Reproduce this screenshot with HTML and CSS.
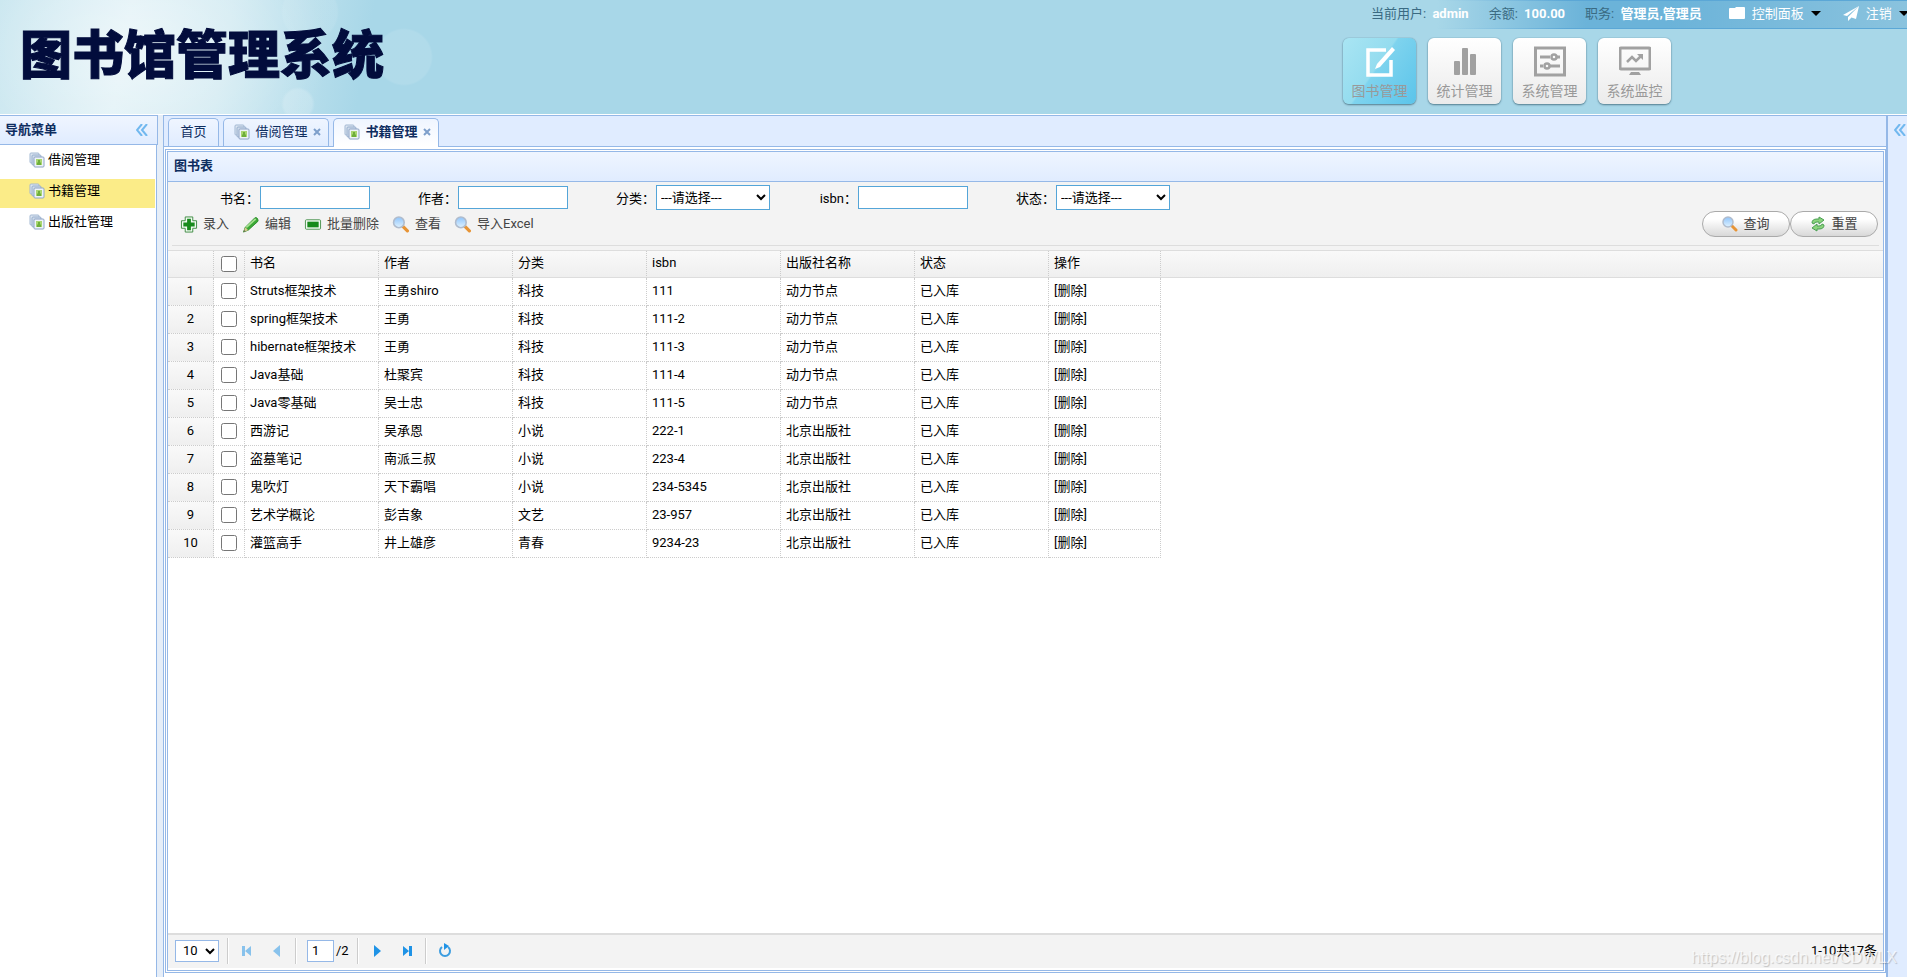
FILE: index.html
```html
<!DOCTYPE html>
<html lang="zh-CN">
<head>
<meta charset="utf-8">
<title>图书馆管理系统</title>
<link rel="stylesheet" href="styles.css">
</head>
<body>
<svg class="sprite" aria-hidden="true">
  <defs>
    <linearGradient id="glass" x1="0" y1="0" x2="0" y2="1"><stop offset="0" stop-color="#8fc4fb"/><stop offset="1" stop-color="#dff2ff"/></linearGradient>
  </defs>
  <symbol id="pages" viewBox="0 0 16 16">
    <rect x="1" y="1" width="9" height="10" rx="1" fill="#dce6f1" stroke="#a3b8d3"/>
    <rect x="3" y="3" width="9" height="10" rx="1" fill="#cfdceb" stroke="#98aecd"/>
    <rect x="5" y="5" width="10" height="10" rx="1" fill="#eef3f9" stroke="#8ea4c6"/>
    <rect x="7" y="7" width="6" height="6" fill="#a9d672"/>
    <path d="M8 13v-2l1-1V8h2v2l1 1v2z" fill="#6fae3c"/>
  </symbol>
  <symbol id="add" viewBox="0 0 18 18">
    <path d="M5 1h8v4h4v8h-4v4H5v-4H1V5h4z" fill="#f2faf2" stroke="#3d8a41" stroke-linejoin="round"/>
    <path d="M7 3h4v4h4v4h-4v4H7v-4H3V7h4z" fill="#178a1c"/>
  </symbol>
  <symbol id="pencil" viewBox="0 0 18 18">
    <path d="M1 17l2-5L13 2q2-1 3 1t0 3L6 15z" fill="#3aa935" stroke="#2b8a2a"/>
    <path d="M4 12L14 3" stroke="#a5e08f" stroke-width="2"/>
    <path d="M1 17l2-5 3 3z" fill="#d9c98e"/><path d="M1 17l1-2 1 1z" fill="#333"/>
  </symbol>
  <symbol id="minus" viewBox="0 0 18 18">
    <rect x="1" y="4" width="16" height="10" rx="1" fill="#f4fbf4" stroke="#4b9350"/>
    <rect x="3" y="6" width="12" height="6" fill="#178a1c"/>
  </symbol>
  <symbol id="search" viewBox="0 0 16 16">
    <path d="M10 10l4 4" stroke="#e79435" stroke-width="3" stroke-linecap="round"/>
    <circle cx="6" cy="6" r="5" fill="url(#glass)" stroke="#b0bccd" stroke-width="1.5"/>
  </symbol>
  <symbol id="reload" viewBox="0 0 16 16">
    <path d="M2 7q0-4 5-4h2V1l5 3-5 4V6H7Q4 6 4 8z" fill="#8bd47d" stroke="#4a9f52" stroke-linejoin="round"/>
    <path d="M14 9q0 4-5 4H7v2l-5-3 5-4v2h2q3 0 3-2z" fill="#8bd47d" stroke="#4a9f52" stroke-linejoin="round"/>
  </symbol>
  <symbol id="chevrons" viewBox="0 0 12 12"><path d="M6 0L1 6l5 6M11 0L6 6l5 6" fill="none" stroke="#71b8ef" stroke-width="2"/></symbol>
  <symbol id="cross" viewBox="0 0 8 8"><path d="M1 1l6 6M7 1L1 7" stroke="#7e9fcb" stroke-width="2"/></symbol>
</svg>

<header class="header">
  <h1 class="logo">图书馆管理系统</h1>
  <div class="header-side">
    <div class="userbar">
      <span class="info">当前用户: <b>admin</b></span>
      <span class="info">余额: <b>100.00</b></span>
      <span class="info">职务: <b>管理员,管理员</b></span>
      <button class="user-menu" type="button">
        <svg class="icon" viewBox="0 0 16 16"><path d="M0 3q0-1 1-1h5l1-1h8q1 0 1 1v10q0 1-1 1H1q-1 0-1-1z" fill="#fff"/></svg>
        控制面板<span class="caret"></span>
      </button>
      <button class="user-menu logout" type="button">
        <svg class="icon" viewBox="0 0 16 16"><path d="M16 0L0 9l4 1zM16 0L5 11l0 4 3-3zM16 0L7 11l6 2z" fill="#fff"/></svg>
        注销<span class="caret"></span>
      </button>
    </div>
    <nav class="apps">
      <button class="app app-active" type="button">
        <svg class="app-icon" viewBox="0 0 32 32"><path d="M22 4H4v25h23V14" fill="none" stroke="#fff" stroke-width="3.5"/><path d="M28 1l3 3-15 17-5 2 2-5z" fill="#fff"/></svg>
        图书管理
      </button>
      <button class="app" type="button">
        <svg class="app-icon" viewBox="0 0 32 32"><g fill="#a1a1a1"><rect x="5" y="15" width="6" height="14" rx="1"/><rect x="13" y="2" width="6" height="27" rx="1"/><rect x="21" y="8" width="6" height="21" rx="1"/></g></svg>
        统计管理
      </button>
      <button class="app" type="button">
        <svg class="app-icon" viewBox="0 0 32 32"><g fill="none" stroke="#a1a1a1" stroke-width="3"><rect x="1.500" y="2" width="29" height="27"/><path d="M6 11h10M23 11h3M6 20h3M16 20h10"/><circle cx="20" cy="11" r="2.500" stroke-width="2.500"/><circle cx="13" cy="20" r="2.500" stroke-width="2.500"/></g></svg>
        系统管理
      </button>
      <button class="app" type="button">
        <svg class="app-icon" viewBox="0 0 32 32"><rect x="1" y="2" width="30" height="21" rx="1" fill="none" stroke="#a1a1a1" stroke-width="3"/><path d="M8 16l5-5 4 4 6-6" fill="none" stroke="#a1a1a1" stroke-width="2.500"/><path d="M18 8h6v6zM12 26h8l2 3H10z" fill="#a1a1a1"/></svg>
        系统监控
      </button>
    </nav>
  </div>
</header>

<div class="workspace">
  <aside class="west">
    <div class="west-head">
      <h2 class="panel-title">导航菜单</h2>
      <button class="collapse" type="button" aria-label="收起"><svg class="chev"><use href="#chevrons"/></svg></button>
    </div>
    <ul class="menu">
      <li><a class="menu-link" href="#borrow"><svg class="icon"><use href="#pages"/></svg>借阅管理</a></li>
      <li><a class="menu-link menu-current" href="#books"><svg class="icon"><use href="#pages"/></svg>书籍管理</a></li>
      <li><a class="menu-link" href="#publisher"><svg class="icon"><use href="#pages"/></svg>出版社管理</a></li>
    </ul>
  </aside>

  <main class="center">
    <div class="tabs" role="tablist">
      <div class="tab"><button class="tab-label" role="tab" type="button">首页</button></div>
      <div class="tab tab-closable"><button class="tab-label" role="tab" type="button"><svg class="icon"><use href="#pages"/></svg>借阅管理</button><button class="tab-close" type="button" aria-label="关闭"><svg class="cross"><use href="#cross"/></svg></button></div>
      <div class="tab tab-closable tab-selected"><button class="tab-label" role="tab" type="button" aria-selected="true"><svg class="icon"><use href="#pages"/></svg>书籍管理</button><button class="tab-close" type="button" aria-label="关闭"><svg class="cross"><use href="#cross"/></svg></button></div>
    </div>
    <div class="frame">
      <section class="panel">
        <h2 class="panel-title panel-head">图书表</h2>
        <div class="toolbar">
          <form class="filters">
            <label class="filter" for="f-name">书名<span class="colon">：</span></label><input class="text" id="f-name" type="text">
            <label class="filter" for="f-author">作者<span class="colon">：</span></label><input class="text" id="f-author" type="text">
            <label class="filter" for="f-type">分类<span class="colon">：</span></label><select class="choice" id="f-type"><option>---请选择---</option></select>
            <label class="filter filter-after-choice" for="f-isbn">isbn<span class="colon">：</span></label><input class="text" id="f-isbn" type="text">
            <label class="filter" for="f-state">状态<span class="colon">：</span></label><select class="choice" id="f-state"><option>---请选择---</option></select>
          </form>
          <div class="actions">
            <button class="action" type="button"><svg class="tool-icon"><use href="#add"/></svg>录入</button>
            <button class="action" type="button"><svg class="tool-icon"><use href="#pencil"/></svg>编辑</button>
            <button class="action" type="button"><svg class="tool-icon"><use href="#minus"/></svg>批量删除</button>
            <button class="action" type="button"><svg class="tool-icon"><use href="#search"/></svg>查看</button>
            <button class="action" type="button"><svg class="tool-icon"><use href="#search"/></svg>导入Excel</button>
            <div class="queries">
              <button class="pill" type="button"><svg class="icon"><use href="#search"/></svg>查询</button>
              <button class="pill" type="button"><svg class="icon"><use href="#reload"/></svg>重置</button>
            </div>
          </div>
        </div>
        <div class="grid">
          <table class="books">
            <colgroup><col class="c-num"><col class="c-check"><col class="c-data"><col class="c-data"><col class="c-data"><col class="c-data"><col class="c-data"><col class="c-data"><col class="c-op"><col></colgroup>
            <thead>
              <tr><th></th><th class="check"><input class="tick" type="checkbox" aria-label="全选"></th><th>书名</th><th>作者</th><th>分类</th><th>isbn</th><th>出版社名称</th><th>状态</th><th>操作</th><th class="rest"></th></tr>
            </thead>
            <tbody>
              <tr><td class="num">1</td><td class="check"><input class="tick" type="checkbox" aria-label="选择 1"></td><td>Struts框架技术</td><td>王勇shiro</td><td>科技</td><td>111</td><td>动力节点</td><td>已入库</td><td><a class="del" href="#d1">[删除]</a></td><td class="rest"></td></tr>
              <tr><td class="num">2</td><td class="check"><input class="tick" type="checkbox" aria-label="选择 2"></td><td>spring框架技术</td><td>王勇</td><td>科技</td><td>111-2</td><td>动力节点</td><td>已入库</td><td><a class="del" href="#d2">[删除]</a></td><td class="rest"></td></tr>
              <tr><td class="num">3</td><td class="check"><input class="tick" type="checkbox" aria-label="选择 3"></td><td>hibernate框架技术</td><td>王勇</td><td>科技</td><td>111-3</td><td>动力节点</td><td>已入库</td><td><a class="del" href="#d3">[删除]</a></td><td class="rest"></td></tr>
              <tr><td class="num">4</td><td class="check"><input class="tick" type="checkbox" aria-label="选择 4"></td><td>Java基础</td><td>杜聚宾</td><td>科技</td><td>111-4</td><td>动力节点</td><td>已入库</td><td><a class="del" href="#d4">[删除]</a></td><td class="rest"></td></tr>
              <tr><td class="num">5</td><td class="check"><input class="tick" type="checkbox" aria-label="选择 5"></td><td>Java零基础</td><td>吴士忠</td><td>科技</td><td>111-5</td><td>动力节点</td><td>已入库</td><td><a class="del" href="#d5">[删除]</a></td><td class="rest"></td></tr>
              <tr><td class="num">6</td><td class="check"><input class="tick" type="checkbox" aria-label="选择 6"></td><td>西游记</td><td>吴承恩</td><td>小说</td><td>222-1</td><td>北京出版社</td><td>已入库</td><td><a class="del" href="#d6">[删除]</a></td><td class="rest"></td></tr>
              <tr><td class="num">7</td><td class="check"><input class="tick" type="checkbox" aria-label="选择 7"></td><td>盗墓笔记</td><td>南派三叔</td><td>小说</td><td>223-4</td><td>北京出版社</td><td>已入库</td><td><a class="del" href="#d7">[删除]</a></td><td class="rest"></td></tr>
              <tr><td class="num">8</td><td class="check"><input class="tick" type="checkbox" aria-label="选择 8"></td><td>鬼吹灯</td><td>天下霸唱</td><td>小说</td><td>234-5345</td><td>北京出版社</td><td>已入库</td><td><a class="del" href="#d8">[删除]</a></td><td class="rest"></td></tr>
              <tr><td class="num">9</td><td class="check"><input class="tick" type="checkbox" aria-label="选择 9"></td><td>艺术学概论</td><td>彭吉象</td><td>文艺</td><td>23-957</td><td>北京出版社</td><td>已入库</td><td><a class="del" href="#d9">[删除]</a></td><td class="rest"></td></tr>
              <tr><td class="num">10</td><td class="check"><input class="tick" type="checkbox" aria-label="选择 10"></td><td>灌篮高手</td><td>井上雄彦</td><td>青春</td><td>9234-23</td><td>北京出版社</td><td>已入库</td><td><a class="del" href="#d10">[删除]</a></td><td class="rest"></td></tr>
            </tbody>
          </table>
        </div>
        <footer class="pager">
          <select class="page-size" aria-label="每页条数"><option>10</option></select>
          <span class="sep"></span>
          <button class="page-btn page-off" type="button" aria-label="首页"><svg class="page-icon" viewBox="0 0 16 16"><path d="M3 3h3v10H3zM12 3v10L6 8z"/></svg></button>
          <button class="page-btn page-off" type="button" aria-label="上一页"><svg class="page-icon" viewBox="0 0 16 16"><path d="M11 2v12L4 8z"/></svg></button>
          <span class="sep"></span>
          <label class="page-now"><input class="page-input" type="text" value="1" aria-label="页码">/2</label>
          <span class="sep"></span>
          <button class="page-btn" type="button" aria-label="下一页"><svg class="page-icon" viewBox="0 0 16 16"><path d="M5 2v12l7-6z"/></svg></button>
          <button class="page-btn" type="button" aria-label="末页"><svg class="page-icon" viewBox="0 0 16 16"><path d="M10 3h3v10h-3zM4 3v10l6-5z"/></svg></button>
          <span class="sep"></span>
          <button class="page-btn" type="button" aria-label="刷新"><svg class="page-icon" viewBox="0 0 16 16"><path d="M5 4a5 5 0 1 0 6 0" fill="none" stroke="#3c9de0" stroke-width="2"/><path d="M7 0l5 3-5 4z"/></svg></button>
          <span class="total">1-10共17条</span>
        </footer>
      </section>
    </div>
  </main>

  <aside class="east"><button class="collapse" type="button" aria-label="展开"><svg class="chev"><use href="#chevrons"/></svg></button></aside>
</div>
<div class="watermark">https://blog.csdn.net/CDWLX</div>
</body>
</html>
```
FILE: styles.css
```css
* { box-sizing: border-box; }

body {
  margin: 0;
  height: 100vh;
  display: flex;
  flex-direction: column;
  overflow: hidden;
  background: #fff;
  color: #000;
  font: 13px/18px Roboto, "Noto Sans CJK SC", sans-serif;
}

button, input, select { font: inherit; color: inherit; margin: 0; }
button { border: 0; padding: 0; background: none; cursor: pointer; white-space: nowrap; }
h1, h2, ul { margin: 0; padding: 0; }
a { color: inherit; text-decoration: none; }
svg { display: block; flex: none; }

.sprite { position: absolute; width: 0; height: 0; }
.icon { width: 16px; height: 16px; }
.tool-icon { width: 18px; height: 17px; }
.chev { width: 12px; height: 12px; }
.cross { width: 8px; height: 8px; }

/* Header */
.header {
  flex: none;
  height: 115px;
  display: flex;
  justify-content: space-between;
  border-bottom: 1px solid #fff;
  background:
    radial-gradient(circle at 310px 12px, rgba(255,255,255,.08) 27px, transparent 29px),
    radial-gradient(circle at 404px 57px, rgba(255,255,255,.1) 27px, transparent 29px),
    radial-gradient(circle at 298px 104px, rgba(255,255,255,.18) 14px, transparent 17px),
    radial-gradient(ellipse 200px 150px at 130px 50px, rgba(255,255,255,.5), transparent),
    linear-gradient(100deg, #c4e4ee 0, #dceff5 130px, #cfe9f1 230px, #a8d7e8 370px);
}
.logo {
  padding: 17px 0 0 20px;
  color: #020c3c;
  font: 900 52px/70px "Noto Sans CJK SC", sans-serif;
  -webkit-text-stroke: 1px #020c3c;
  stroke-linejoin: round;
  white-space: nowrap;
}
.header-side { width: 580px; overflow: hidden; }
.userbar {
  height: 29px;
  display: flex;
  align-items: center;
  padding: 0 0 2px 44px;
  border-top: 1px solid #a0cfe2;
  border-bottom: 1px solid #62aad6;
  border-image: linear-gradient(90deg, #a8d7e8 110px, #5ba7d6 240px) 1;
  background: linear-gradient(90deg, #a8d7e8 110px, #6bb3d9 260px, #6bb3d9 340px, #8ac3de);
  color: #3a6a82;
  white-space: nowrap;
}
.info { margin-right: 20px; }
.info b { margin-left: 3px; color: #fff; font-weight: 700; }
.user-menu { display: flex; align-items: center; gap: 7px; margin-left: 7px; color: #fff; }
.logout { margin-left: 22px; }
.caret { border: 5px solid transparent; border-top-color: #000; border-bottom: 0; }

.apps { display: flex; gap: 12px; padding: 9px 0 0 16px; }
.app {
  width: 73px;
  height: 66px;
  display: flex;
  flex-direction: column;
  align-items: center;
  gap: 3px;
  padding-top: 8px;
  border-radius: 6px;
  background: linear-gradient(#fff, #ebebeb);
  box-shadow: 0 0 1px #557f90, 0 1px 2px #557f90;
  color: #999;
  font-size: 14px;
  line-height: 20px;
}
.app-active { background: linear-gradient(125deg, #a9e5f3 0, #94dcef 45%, #7ed3ee 47%, #5bc4ea 100%); }
.app-icon { width: 32px; height: 32px; }

/* Frame regions */
.workspace { flex: 1; min-height: 0; display: flex; background: #e6eef8; }
.panel-title { color: #0e2d5f; font-size: 13px; line-height: 18px; font-weight: 700; }

.west { width: 158px; flex: none; display: flex; flex-direction: column; }
.west-head {
  height: 30px;
  display: flex;
  align-items: center;
  justify-content: space-between;
  padding: 0 9px 1px 5px;
  border: 1px solid #95b8e7;
  border-left: 0;
  background: linear-gradient(#eff5ff, #e0ecff);
}
.menu { flex: 1; list-style: none; margin-right: 1px; padding-top: 3px; border-right: 1px solid #95b8e7; background: #fff; }
.menu-link {
  height: 29px;
  display: flex;
  align-items: center;
  gap: 3px;
  margin: 0 1px 2px 0;
  padding: 0 0 5px 29px;
}
.menu-current { background: #fbec88; }

.center { flex: 1; min-width: 0; margin-left: 5px; display: flex; flex-direction: column; border: 1px solid #95b8e7; border-bottom: 0; background: #fff; }
.tabs {
  flex: none;
  display: flex;
  gap: 4px;
  height: 31px;
  padding: 2px 4px 0;
  border-bottom: 1px solid #95b8e7;
  background: #e0ecff;
}
.tab {
  height: 28px;
  display: flex;
  align-items: center;
  justify-content: center;
  gap: 5px;
  width: 51px;
  padding-bottom: 2px;
  border: 1px solid #95b8e7;
  border-bottom: 0;
  border-radius: 5px 5px 0 0;
  background: linear-gradient(#eff5ff, #e0ecff);
  color: #0e2d5f;
}
.tab-closable { width: 106px; padding-left: 3px; }
.tab-selected { height: 29px; padding-bottom: 3px; background: linear-gradient(#eff5ff, #fff); font-weight: 700; }
.tab-label { display: flex; align-items: center; gap: 5px; }

.frame { flex: 1; min-height: 0; margin: 2px 0 4px 1px; padding: 1px; border: 1px solid #95b8e7; background: #fff; }
.panel { height: 100%; display: flex; flex-direction: column; padding-bottom: 2px; border: 1px solid #95b8e7; }
.panel-head { flex: none; height: 30px; padding: 5px 6px; border-bottom: 1px solid #95b8e7; background: linear-gradient(#eff5ff, #e0ecff); }

/* Toolbar */
.toolbar { flex: none; padding: 3px 4px 4px; background: #f3f3f3; }
.filters { display: flex; align-items: center; white-space: nowrap; }
.filter { width: 88px; padding: 2px 1px 0 0; text-align: right; }
.colon { font-family: "Noto Sans CJK TC", sans-serif; }
.text { width: 110px; height: 23px; padding: 0 4px; border: 1px solid #54a5d8; background: #fff; }
.choice { width: 114px; height: 25px; padding: 0; border: 1px solid #54a5d8; background: #fff; }
.actions { display: flex; align-items: center; gap: 13px; margin-top: 1px; padding: 0 1px 8px 8px; border-bottom: 1px solid #ddd; }
.action { display: flex; align-items: center; gap: 5px; color: #444; }
.queries { display: flex; margin-left: auto; }
.pill {
  width: 88px;
  height: 26px;
  display: flex;
  align-items: center;
  justify-content: center;
  gap: 5px;
  border: 1px solid #aaa;
  border-radius: 13px;
  background: linear-gradient(#fff 30%, #d8d8d8);
  color: #444;
}

/* Table */
.grid { flex: 1; min-height: 0; overflow: hidden; border-top: 1px solid #ddd; background: #fff; }
.books { width: 100%; table-layout: fixed; border-collapse: separate; border-spacing: 0; }
.c-num { width: 46px; }
.c-check { width: 31px; }
.c-data { width: 134px; }
.c-op { width: 112px; }
.books th, .books td { height: 28px; padding: 0 5px 2px; border: 0 dotted #ccc; border-width: 0 1px 1px 0; text-align: left; font-weight: 400; white-space: nowrap; }
.books th { height: 27px; border-bottom: 1px solid #ddd; background: linear-gradient(#f9f9f9, #efefef); }
.books .num { text-align: center; background: linear-gradient(#f9f9f9, #efefef); }
.books .check { padding: 0 0 1px; text-align: center; }
.books th.rest { border-right: 0; }
.books td.rest { border: 0; }
.tick { display: block; width: 16px; height: 16px; margin: 0 auto; }

/* Pager */
.pager { flex: none; height: 35px; display: flex; align-items: center; padding: 0 6px 2px 7px; border-top: 2px solid #ddd; background: #f3f3f3; }
.page-size { width: 44px; height: 22px; margin-right: 5px; padding: 0 0 0 3px; border: 1px solid #95b8e7; background: #fff; }
.sep { width: 2px; height: 26px; margin: 0 3px; border-left: 1px solid #ccc; border-right: 1px solid #fff; }
.page-btn { width: 28px; height: 26px; display: flex; align-items: center; justify-content: center; margin: 0 1px; }
.page-icon { width: 16px; height: 16px; fill: #1f93e6; }
.page-off { opacity: .5; }
.page-now { display: flex; align-items: center; gap: 2px; margin: 0 5px 0 7px; }
.page-input { width: 27px; height: 22px; padding: 0 4px; border: 1px solid #95b8e7; background: #fff; }
.total { margin-left: auto; }

.east { width: 20px; flex: none; padding: 8px 0 0 6px; border: 1px solid #95b8e7; border-width: 1px 0 0 1px; background: #e0ecff; }
.collapse { display: block; }

.watermark {
  position: absolute;
  right: 10px;
  bottom: 9px;
  color: rgba(255,255,255,.7);
  font: 16px/20px "Liberation Sans", sans-serif;
  text-shadow: 1px 1px 1px rgba(0,0,0,.2);
  pointer-events: none;
}
```
